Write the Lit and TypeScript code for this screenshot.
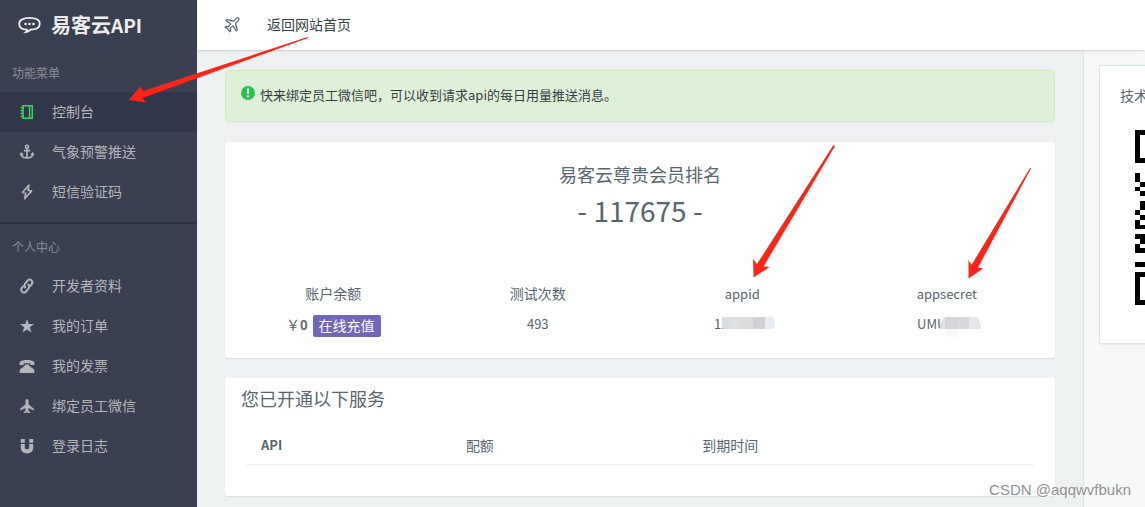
import { LitElement, html, css, svg } from "lit";
import { customElement } from "lit/decorators.js";

const icons: Record<string, unknown> = {
  notebook: svg`<path d="M4 1.700h9.300v12.600H4zM10.600 1.700v12.600M1.500 3.500H5M1.500 6.500H5M1.500 9.500H5M1.500 12.500H5" fill="none" stroke="currentColor" stroke-width="1.500"/>`,
  anchor: svg`<circle cx="8" cy="2.700" r="1.500" fill="none" stroke="currentColor" stroke-width="1.500"/><path d="M8 4.200v10M4.800 6.600h6.400M2 9.500c.3 3 2.700 4.500 6 4.500s5.700-1.500 6-4.500" fill="none" stroke="currentColor" stroke-width="1.700"/><path d="M.5 11.400 2.200 8l2.600 2.800zM15.500 11.400 13.800 8l-2.600 2.800z" fill="currentColor"/>`,
  bolt: svg`<path d="M9.900 1.300 3.400 8.500l3.500.8-1.300 5.500 7-7.700-3.600-.8z" fill="none" stroke="currentColor" stroke-width="1.600" stroke-linejoin="round"/>`,
  link: svg`<g fill="none" stroke="currentColor" stroke-width="2" stroke-linecap="round"><path d="M6.200 9.500c-1.200-1.200-1-2.700 0-3.900l2.300-3c1.200-1.300 2.900-1.300 4-.2s1.100 2.700.1 4l-.9 1.200"/><path d="M9.300 6.600c1.200 1.200 1.100 2.700.1 3.900l-2.300 3c-1.200 1.300-2.900 1.300-4 .2s-1.100-2.700-.1-4l.9-1.200"/></g>`,
  star: svg`<path d="m8 1.200 1.800 4.900H15l-4.100 3.200 1.500 5.100L8 11.400l-4.400 3 1.500-5.100L1 6.100h5.200z" fill="currentColor"/>`,
  phone: svg`<path d="M.6 7V4.600C1 2.900 4 1.900 8 1.900s7 1 7.400 2.700V7h-4V5.200H4.600V7z" fill="currentColor"/><path d="M6 6.600h4v.9l5.300 4.200v3.200H.7v-3.200L6 7.500z" fill="currentColor"/>`,
  plane: svg`<path d="M8 1c.9 0 1.500.9 1.500 2v3.500l5.400 4.300v1.700L9.500 10.100v2.700l1.900 1.400v1.100L8 14.600l-3.400.7v-1.100l1.900-1.400v-2.700l-5.400 2.400v-1.700l5.400-4.300V3c0-1.100.6-2 1.500-2z" fill="currentColor"/>`,
  magnet: svg`<path d="M1.800 1h4v3.700h-4zM10.200 1h4v3.700h-4zM1.800 6h4v3.200c0 1.300.8 2.100 2.200 2.100s2.200-.8 2.200-2.100V6h4v3.500c0 3.500-2.500 5.900-6.200 5.900s-6.200-2.400-6.200-5.900z" fill="currentColor"/>`,
};

const menus = [
  {
    title: "功能菜单",
    items: [
      { icon: "notebook", text: "控制台", active: true },
      { icon: "anchor", text: "气象预警推送" },
      { icon: "bolt", text: "短信验证码" },
    ],
  },
  {
    title: "个人中心",
    items: [
      { icon: "link", text: "开发者资料" },
      { icon: "star", text: "我的订单" },
      { icon: "phone", text: "我的发票" },
      { icon: "plane", text: "绑定员工微信" },
      { icon: "magnet", text: "登录日志" },
    ],
  },
];

// Dark modules of the QR code's first columns, one string per row.
const qrRows = [
  "111", "100", "101", "101", "101", "100", "111", "000", "000",
  "100", "100", "011", "100", "011", "000", "010", "011", "101",
  "011", "101", "111", "000", "110", "011", "101", "111", "000",
  "000", "110", "000", "111", "100", "101", "101", "101", "100", "111",
];

@customElement("app-root")
export class AppRoot extends LitElement {
  static styles = css`
    :host {
      display: block;
      position: relative;
      min-height: 100vh;
      overflow: hidden;
      background: #edf1f2;
      color: #58666e;
      font-family: "Noto Sans CJK SC", sans-serif;
      font-size: 14px;
      line-height: 20px;
    }
    * { box-sizing: border-box; }
    a { color: inherit; text-decoration: none; }
    h1, h2, p, ul, dl, dd { margin: 0; padding: 0; font-weight: 400; }
    ul { list-style: none; }
    .shell {
      display: grid;
      grid-template-columns: 197px minmax(0, 1fr);
      min-height: 100vh;
    }
    .side { background: #3a3f51; color: #b4b6bd; }
    .brand {
      display: flex;
      align-items: center;
      gap: 10px;
      height: 50px;
      padding-left: 18px;
      color: #eceded;
      font-size: 20px;
      font-weight: 700;
    }
    .brand-latin { font-size: 19px; }
    .group { padding-bottom: 10px; }
    .group + .group { border-top: 2px solid #2e3344; }
    .group-title {
      padding: 14px 12px 10px;
      font-size: 12px;
      line-height: 18px;
      color: #8b8e98;
    }
    .item {
      display: flex;
      align-items: center;
      gap: 17px;
      height: 40px;
      padding-left: 19px;
    }
    .label { padding-bottom: 2px; }
    .item.active { background: #32364a; }
    .item.active .icon { color: #3bd15b; }
    .icon { width: 16px; height: 16px; flex: none; }
    .page { display: flex; flex-direction: column; min-width: 0; }
    .top {
      display: flex;
      align-items: center;
      gap: 27px;
      height: 50px;
      padding-left: 27px;
      background: #fff;
      color: #363f44;
      box-shadow: 0 1px 2px rgba(0, 0, 0, 0.15);
      z-index: 1;
    }
    .top .icon { color: #58666e; }
    .body { display: flex; flex: 1; }
    .main {
      flex: 1;
      min-width: 0;
      display: flex;
      flex-direction: column;
      gap: 20px;
      padding: 20px 28px 10px;
    }
    .alert {
      display: flex;
      gap: 5px;
      min-height: 52px;
      padding: 15px;
      border: 1px solid #d0e9c0;
      border-radius: 4px;
      background: #dff0d8;
      color: #363f44;
      font-size: 13px;
      line-height: 18px;
    }
    .card {
      background: #fff;
      border-radius: 3px;
      box-shadow: 0 1px 1px rgba(0, 0, 0, 0.08);
    }
    .rank { padding: 19px 6px 21px; text-align: center; }
    .rank-title { font-size: 18px; line-height: 26px; }
    .rank-number { font-size: 28px; line-height: 46px; }
    .stats {
      display: grid;
      grid-template-columns: repeat(4, 1fr);
      margin-top: 50px;
    }
    .stat dt { line-height: 20px; }
    .stat dd {
      display: flex;
      justify-content: center;
      align-items: flex-start;
      height: 22px;
      margin-top: 12px;
      font-size: 13px;
      line-height: 18px;
    }
    .stat .latin { font-size: 13px; line-height: 22px; margin-bottom: -2px; }
    .money { font-size: 14px; }
    .money b { font-size: 13px; }
    .pay {
      height: 22px;
      margin-left: 5px;
      padding: 0 6px 2px;
      border: 0;
      border-radius: 2px;
      background: #7266ba;
      color: #fff;
      font: inherit;
      font-size: 14px;
      line-height: 20px;
    }
    .mosaic { flex: none; margin: 2px -5px 0 -6px; }
    .services { height: 118px; padding: 6px 16px; }
    .services-title { font-size: 18px; line-height: 28px; }
    .table-wrap { padding: 17px 5px 0; }
    table { width: 100%; border-collapse: collapse; table-layout: fixed; }
    th {
      height: 35px;
      padding: 0 15px 2px;
      border-bottom: 1px solid #eaeff0;
      text-align: left;
      font-weight: 400;
    }
    th.api { width: 26%; font-size: 13px; font-weight: 700; }
    th.quota { width: 30%; }
    .aside {
      flex: 0 0 62px;
      overflow: hidden;
      padding: 15px 0 0 15px;
      border-left: 1px solid #dee5e7;
      background: #f6f8f8;
    }
    .support {
      width: 210px;
      height: 279px;
      padding: 20px;
      background: #fff;
      border: 1px solid #dee5e7;
      border-radius: 2px;
      box-shadow: 0 1px 1px rgba(0, 0, 0, 0.05);
    }
    .support p { line-height: 18px; }
    .qr { display: block; margin: 26px 0 0 15px; }
    .marks {
      position: absolute;
      left: 0;
      top: 0;
      z-index: 2;
      pointer-events: none;
    }
    .watermark {
      position: absolute;
      right: 14px;
      bottom: 7px;
      z-index: 3;
      color: #8e9093;
      font-family: "Liberation Sans", sans-serif;
      font-size: 15px;
      text-shadow: 1px 1px 0 #fff;
    }
  `;

  private icon(name: string) {
    return html`<svg class="icon" viewBox="0 0 16 16" aria-hidden="true">${icons[name]}</svg>`;
  }

  render() {
    return html`
      <div class="shell">
        <nav class="side">
          <a class="brand" href="#">
            <svg width="23" height="18" viewBox="0 0 23 18" fill="none" stroke="currentColor" stroke-width="1.800" aria-hidden="true">
              <path d="M9 13.700C4.500 13.500 1.200 11.300 1.200 7.700 1.200 4 5.500 1.800 11.500 1.800s10.300 2.200 10.300 5.900c0 3.700-4.100 5.800-9.300 6-1.300 1.400-2.500 2.300-4.700 2.500 1-.8 1.300-1.700 1.200-2.500z"/>
              <circle cx="7.500" cy="8" r="1.300" fill="currentColor" stroke="none"/>
              <circle cx="11.500" cy="8" r="1.300" fill="currentColor" stroke="none"/>
              <circle cx="15.500" cy="8" r="1.300" fill="currentColor" stroke="none"/>
            </svg>
            <span>易客云<span class="brand-latin">API</span></span>
          </a>
          ${menus.map(
            (m) => html`<section class="group">
              <h2 class="group-title">${m.title}</h2>
              <ul>
                ${m.items.map(
                  (i: any) => html`<li>
                    <a class="item ${i.active ? "active" : ""}" href="#">${this.icon(i.icon)}<span class="label">${i.text}</span></a>
                  </li>`
                )}
              </ul>
            </section>`
          )}
        </nav>
        <div class="page">
          <header class="top">
            <svg class="icon" viewBox="0 0 16 16" fill="none" stroke="currentColor" stroke-width="1.200" stroke-linejoin="round" aria-hidden="true">
              <path d="M14.700 1.100c-.9-.5-2 0-2.800.8L9.700 4.100 3 2.500 1.900 3.600l5 3.300-2.500 2.700-2.500-.2-.9.900 2.800 1.700 1.700 2.800.9-.9-.2-2.500 2.700-2.500 3.300 5 1.100-1.100-1.600-6.700L13.900 4c.8-.8 1.300-2.100.8-2.900zM9.700 4.100 5 3.400M11.700 6.100l.7 4.900"/>
            </svg>
            <a class="label" href="#">返回网站首页</a>
          </header>
          <div class="body">
            <main class="main">
              <div class="alert" role="status">
                <svg width="14" height="14" viewBox="0 0 14 14" aria-hidden="true">
                  <circle cx="7" cy="7" r="7" fill="#27c24c"/>
                  <path d="M5.900 2.500h2.200l-.3 5.500H6.200zM6 9.200h2v2H6z" fill="#fff"/>
                </svg>
                <span>快来绑定员工微信吧，可以收到请求api的每日用量推送消息。</span>
              </div>
              <section class="card rank">
                <h1 class="rank-title">易客云尊贵会员排名</h1>
                <p class="rank-number">- 117675 -</p>
                <div class="stats">
                  <dl class="stat">
                    <dt>账户余额</dt>
                    <dd><span class="money">￥<b>0</b></span><button class="pay" type="button">在线充值</button></dd>
                  </dl>
                  <dl class="stat"><dt>测试次数</dt><dd>493</dd></dl>
                  <dl class="stat">
                    <dt class="latin">appid</dt>
                    <dd>12<svg class="mosaic" width="53" height="12" viewBox="0 0 53 12" aria-hidden="true">
                      <path d="M3 0h4v12H3a6 6 0 0 1 0-12z" fill="#d8dbdf"/>
                      <path d="M7 0h24v12H7z" fill="#e0e0e1"/><path d="M19 0h12v12H19z" fill="#dcdcdd"/>
                      <path d="M31 0h12v12H31z" fill="#d1d0d3"/>
                      <path d="M43 0h6q4 0 4 6t-4 6h-6z" fill="#e9edf1"/>
                    </svg></dd>
                  </dl>
                  <dl class="stat">
                    <dt class="latin">appsecret</dt>
                    <dd>UMU<svg class="mosaic" width="41" height="12" viewBox="0 0 41 12" overflow="visible" aria-hidden="true">
                      <path d="M5 0v12H0Q0 3 5 0z" fill="#dfe2e8"/>
                      <path d="M5 0h12v12H5z" fill="#d5d4d6"/><path d="M17 0h12v12H17z" fill="#d9d7da"/>
                      <path d="M29 0h7q5 3 5 12H29z" fill="#e5e7ec"/>
                      <path d="M5 12h12v9q-8 1-12-4z" fill="#f9f9f9"/>
                    </svg></dd>
                  </dl>
                </div>
              </section>
              <section class="card services">
                <h2 class="services-title">您已开通以下服务</h2>
                <div class="table-wrap">
                  <table>
                    <thead>
                      <tr><th class="api" scope="col">API</th><th class="quota" scope="col">配额</th><th scope="col">到期时间</th></tr>
                    </thead>
                  </table>
                </div>
              </section>
            </main>
            <aside class="aside">
              <div class="support">
                <p>技术</p>
                <svg class="qr" width="15" height="175" viewBox="0 0 3 37" preserveAspectRatio="none" shape-rendering="crispEdges" aria-hidden="true">
                  ${qrRows.map((row, y) =>
                    [...row].map((c, x) => (c === "1" ? svg`<rect x=${x} y=${y} width="1" height="1"/>` : null))
                  )}
                </svg>
              </div>
            </aside>
          </div>
        </div>
      </div>
      <svg class="marks" width="1145" height="300" viewBox="0 0 1145 300" fill="#ff2416" aria-hidden="true">
        <path d="M307.500 37 143 91l-2.500-4.500-12 13.500 17 2.500-3-4.500L308 38z"/>
        <path d="M833.500 145 757 264l-4-5 .5 18.500 16-10.500-6-.5L835 146z"/>
        <path d="M1030 168l-58.500 97-3-5v18.500l14.500-10-5-1L1031 168.500z"/>
      </svg>
      <div class="watermark">CSDN @aqqwvfbukn</div>
    `;
  }
}
